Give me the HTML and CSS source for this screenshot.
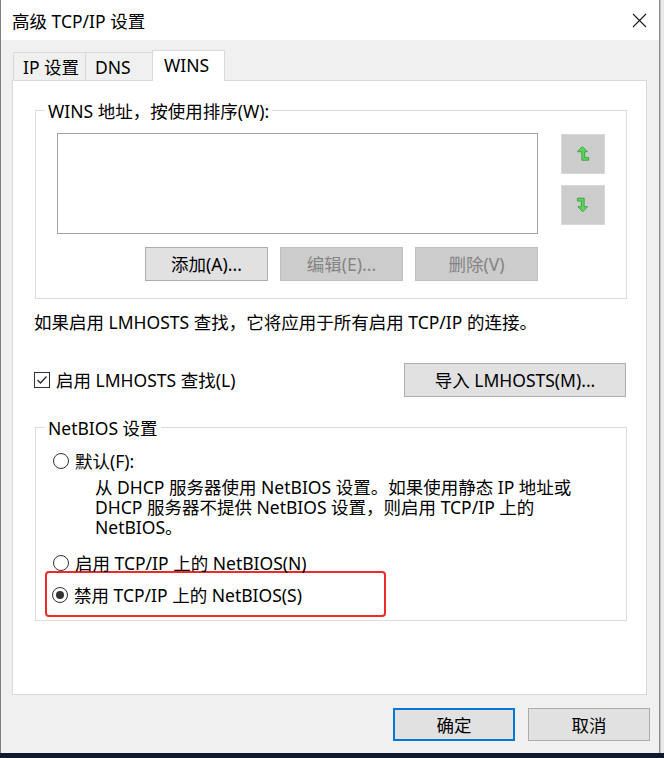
FILE: index.html
```html
<!DOCTYPE html>
<html lang="zh-CN">
<head>
<meta charset="utf-8">
<title>高级 TCP/IP 设置</title>
<link rel="stylesheet" href="styles.css">
</head>
<body>
<div class="screen">
  <div class="window">
    <div class="titlebar">
      <span class="title">高级 TCP/IP 设置</span>
      <svg class="close" width="15" height="15" viewBox="0 0 15 15"><path d="M1 1 L14 14 M14 1 L1 14" stroke="#1a1a1a" stroke-width="1.1" fill="none"/></svg>
    </div>
    <div class="client">
      <div class="tabs">
        <div class="tab tab-ip">IP 设置</div>
        <div class="tab tab-dns">DNS</div>
        <div class="tab tab-active">WINS</div>
      </div>
      <div class="panel">
        <div class="group group-wins">
          <div class="group-title">WINS 地址，按使用排序(W):</div>
          <div class="list-row">
            <div class="listbox"></div>
            <div class="order-buttons">
              <button class="btn-icon" disabled>
                <svg width="16" height="18" viewBox="0 0 14 16"><path d="M6.5 1.5 L11 6 L8.5 6 L8.5 11 L12 11 L12 13.5 L6 13.5 L6 6 L2 6 Z" fill="#5fd35f" stroke="#33a033" stroke-width="0.8" stroke-linejoin="round"/></svg>
              </button>
              <button class="btn-icon" disabled>
                <svg width="16" height="18" viewBox="0 0 14 16"><path d="M2 2 L8 2 L8 9.5 L11 9.5 L6.8 14 L2.5 9.5 L5.5 9.5 L5.5 4.5 L2 4.5 Z" fill="#5fd35f" stroke="#33a033" stroke-width="0.8" stroke-linejoin="round"/></svg>
              </button>
            </div>
          </div>
          <div class="btn-row">
            <button class="btn">添加(A)...</button>
            <button class="btn" disabled>编辑(E)...</button>
            <button class="btn" disabled>删除(V)</button>
          </div>
        </div>
        <p class="info">如果启用 LMHOSTS 查找，它将应用于所有启用 TCP/IP 的连接。</p>
        <div class="lm-row">
          <label class="check"><span class="checkbox"><svg width="14" height="14" viewBox="0 0 14 14"><path d="M2.5 7 L5.5 10 L11.5 3.5" stroke="#2b2b2b" stroke-width="1.3" fill="none"/></svg></span>启用 LMHOSTS 查找(L)</label>
          <button class="btn btn-import">导入 LMHOSTS(M)...</button>
        </div>
        <div class="group group-netbios">
          <div class="group-title">NetBIOS 设置</div>
          <label class="radio r-default"><span class="radio-dot"></span>默认(F):</label>
          <div class="desc">从 DHCP 服务器使用 NetBIOS 设置。如果使用静态 IP 地址或<br>DHCP 服务器不提供 NetBIOS 设置，则启用 TCP/IP 上的<br>NetBIOS。</div>
          <label class="radio r-enable"><span class="radio-dot"></span>启用 TCP/IP 上的 NetBIOS(N)</label>
          <div class="highlight">
            <label class="radio"><span class="radio-dot checked"></span>禁用 TCP/IP 上的 NetBIOS(S)</label>
          </div>
        </div>
      </div>
      <div class="footer">
        <button class="btn btn-ok">确定</button>
        <button class="btn btn-cancel">取消</button>
      </div>
    </div>
  </div>
  <div class="side"></div>
</div>
<div class="taskbar"></div>
</body>
</html>
```
FILE: styles.css
```css
html, body {
  margin: 0;
  padding: 0;
}

body {
  width: 664px;
  height: 758px;
  overflow: hidden;
  background: #f0f0f0;
  font-family: "Noto Sans", "Noto Sans CJK SC", sans-serif;
  font-size: 17.5px;
  color: #000;
}

.screen {
  display: flex;
  height: 753px;
}

.window {
  width: 660px;
  box-sizing: border-box;
  border-left: 1px solid #7f7f7f;
  border-right: 1px solid #8a8a8a;
  display: flex;
  flex-direction: column;
  background: #f0f0f0;
}

.side {
  flex: 1;
  background: #e9e9e9;
  border-left: 1px solid #c4c4c4;
}

.taskbar {
  height: 5px;
  background: #0f1a2a;
}

.titlebar {
  height: 40px;
  background: #fff;
  display: flex;
  align-items: center;
  justify-content: space-between;
  padding: 0 12px 0 11px;
}

.title {
  line-height: 20px;
  margin-top: 1px;
}

.close {
  display: block;
  margin-top: 1px;
}

.client {
  flex: 1;
  padding: 10px 12px 0 11px;
}

.tabs {
  display: flex;
  align-items: flex-end;
  height: 30px;
  padding-left: 1px;
}

.tab {
  box-sizing: border-box;
  height: 28px;
  border: 1px solid #d9d9d9;
  border-bottom: none;
  background: #f0f0f0;
  display: flex;
  align-items: center;
  padding-left: 9px;
  line-height: 20px;
}

.tab-ip {
  width: 73px;
}

.tab-dns {
  width: 66px;
  border-left: none;
  border-right: none;
}

.tab-active {
  width: 73px;
  height: 31px;
  margin-bottom: -1px;
  padding-left: 11px;
  padding-bottom: 3px;
  background: #fff;
  position: relative;
  z-index: 1;
}

.panel {
  box-sizing: border-box;
  height: 615px;
  border: 1px solid #d9d9d9;
  background: #fff;
}

.group {
  border: 1px solid #dcdcdc;
  margin-left: 22px;
  margin-right: 19px;
}

.group-wins {
  margin-top: 29px;
  padding-bottom: 17px;
}

.group-title {
  width: fit-content;
  margin: -10px 0 0 9px;
  padding: 0 3px;
  background: #fff;
  line-height: 20px;
}

.list-row {
  display: flex;
  align-items: flex-start;
  margin: 12px 0 0 21px;
}

.listbox {
  box-sizing: border-box;
  width: 481px;
  height: 101px;
  border: 1px solid #a2a2a2;
  background: #fff;
}

.order-buttons {
  display: flex;
  flex-direction: column;
  gap: 11px;
  margin: 1px 0 0 23px;
}

.btn-icon {
  box-sizing: border-box;
  width: 44px;
  height: 40px;
  padding: 0;
  background: #cccccc;
  border: 1px solid #d8d8d8;
  display: flex;
  align-items: center;
  justify-content: center;
}

.btn-row {
  display: flex;
  gap: 12px;
  margin: 13px 0 0 109px;
}

.btn {
  box-sizing: border-box;
  width: 123px;
  height: 34px;
  padding: 0;
  margin: 0;
  border: 1px solid #adadad;
  background: #e1e1e1;
  font: inherit;
  color: #000;
  line-height: 20px;
}

.btn:disabled {
  background: #cccccc;
  border-color: #bfbfbf;
  color: #848484;
}

.info {
  margin: 13px 0 0 21px;
  line-height: 20px;
}

.lm-row {
  display: flex;
  align-items: center;
  height: 34px;
  margin-top: 31px;
  padding: 0 20px 0 21px;
}

.check {
  display: flex;
  align-items: center;
  line-height: 20px;
}

.checkbox {
  box-sizing: border-box;
  width: 16px;
  height: 16px;
  border: 1px solid #333;
  background: #fff;
  margin-right: 6px;
  display: flex;
  align-items: center;
  justify-content: center;
}

.checkbox svg {
  display: block;
}

.btn-import {
  width: 222px;
  margin-left: auto;
}

.group-netbios {
  margin-top: 30px;
  padding-bottom: 3px;
}

.radio {
  display: flex;
  align-items: center;
  line-height: 20px;
  margin-left: 17px;
}

.radio-dot {
  box-sizing: border-box;
  width: 16px;
  height: 16px;
  border: 1px solid #333;
  border-radius: 50%;
  background: #fff;
  margin-right: 6px;
  display: flex;
  align-items: center;
  justify-content: center;
}

.radio-dot.checked::after {
  content: "";
  width: 8px;
  height: 8px;
  border-radius: 50%;
  background: #333;
}

.r-default {
  margin-top: 13px;
}

.desc {
  margin: 6px 0 0 59px;
  line-height: 20px;
}

.r-enable {
  margin-top: 16px;
}

.highlight {
  box-sizing: border-box;
  width: 341px;
  height: 46px;
  margin: -2px 0 0 9px;
  padding-top: 12px;
  border: 2px solid #f02a2a;
  border-radius: 4px;
}

.highlight .radio {
  margin-left: 5px;
}

.footer {
  display: flex;
  justify-content: flex-end;
  gap: 13px;
  margin: 13px -3px 0 0;
}

.footer .btn {
  width: 122px;
  height: 33px;
}

.btn-ok {
  border: 2px solid #0078d7;
}
```
